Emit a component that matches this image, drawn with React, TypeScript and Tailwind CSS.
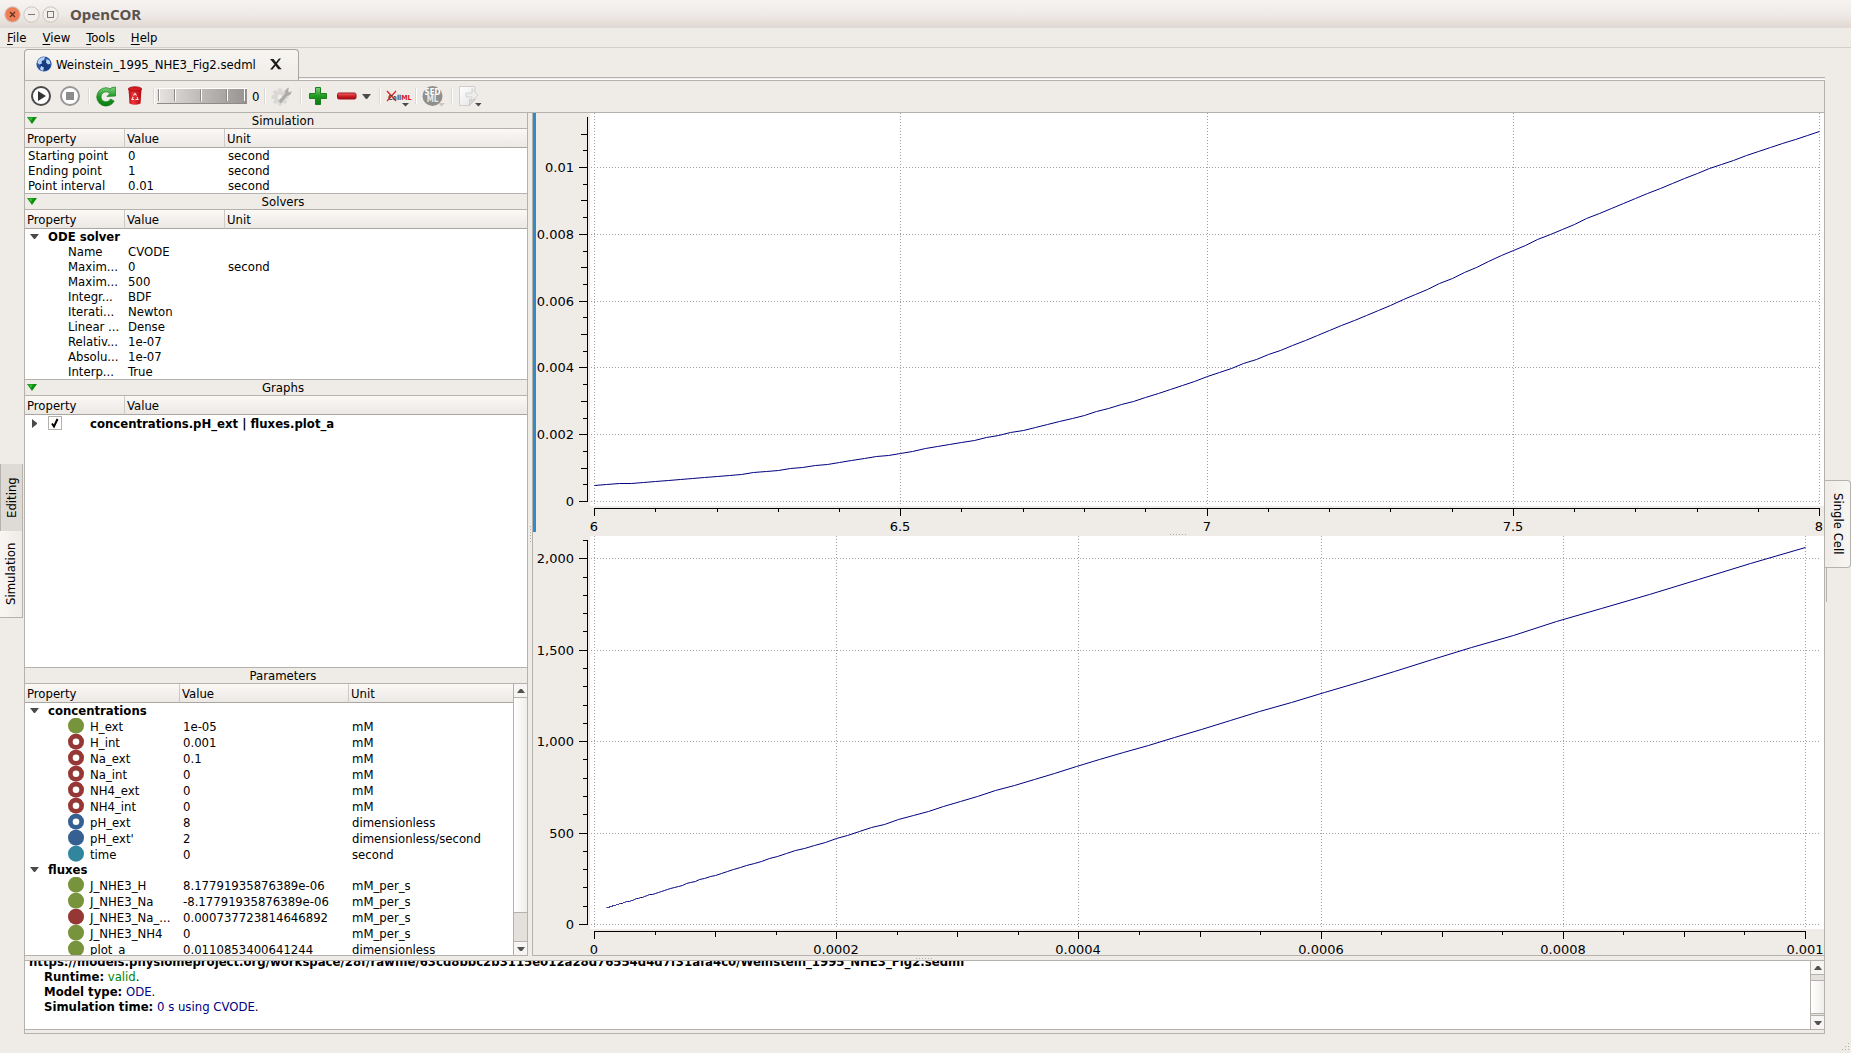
import { useLayoutEffect, useRef, useState } from "react";
import type { ReactNode } from "react";

type IconKind = "constant" | "computed" | "editableConstant" | "editableState" | "rate" | "voi";

interface Row {
  name: string;
  value?: string;
  unit?: string;
  icon?: IconKind;
  group?: boolean;
}

const simulationRows: Row[] = [
  { name: "Starting point", value: "0", unit: "second" },
  { name: "Ending point", value: "1", unit: "second" },
  { name: "Point interval", value: "0.01", unit: "second" },
];

const solverRows: Row[] = [
  { name: "Name", value: "CVODE" },
  { name: "Maxim...", value: "0", unit: "second" },
  { name: "Maxim...", value: "500" },
  { name: "Integr...", value: "BDF" },
  { name: "Iterati...", value: "Newton" },
  { name: "Linear ...", value: "Dense" },
  { name: "Relativ...", value: "1e-07" },
  { name: "Absolu...", value: "1e-07" },
  { name: "Interp...", value: "True" },
];

const parameterRows: Row[] = [
  { name: "concentrations", group: true },
  { name: "H_ext", value: "1e-05", unit: "mM", icon: "computed" },
  { name: "H_int", value: "0.001", unit: "mM", icon: "editableConstant" },
  { name: "Na_ext", value: "0.1", unit: "mM", icon: "editableConstant" },
  { name: "Na_int", value: "0", unit: "mM", icon: "editableConstant" },
  { name: "NH4_ext", value: "0", unit: "mM", icon: "editableConstant" },
  { name: "NH4_int", value: "0", unit: "mM", icon: "editableConstant" },
  { name: "pH_ext", value: "8", unit: "dimensionless", icon: "editableState" },
  { name: "pH_ext'", value: "2", unit: "dimensionless/second", icon: "rate" },
  { name: "time", value: "0", unit: "second", icon: "voi" },
  { name: "fluxes", group: true },
  { name: "J_NHE3_H", value: "8.17791935876389e-06", unit: "mM_per_s", icon: "computed" },
  { name: "J_NHE3_Na", value: "-8.17791935876389e-06", unit: "mM_per_s", icon: "computed" },
  { name: "J_NHE3_Na_...", value: "0.000737723814646892", unit: "mM_per_s", icon: "constant" },
  { name: "J_NHE3_NH4", value: "0", unit: "mM_per_s", icon: "computed" },
  { name: "plot_a", value: "0.0110853400641244", unit: "dimensionless", icon: "computed" },
];

const iconColors: Record<IconKind, string> = {
  constant: "#953735",
  computed: "#77933c",
  editableConstant: "#953735",
  editableState: "#376092",
  rate: "#376092",
  voi: "#31859c",
};

/* ---------- plots ---------- */

type Point = [number, number];

interface PlotProps {
  label: string;
  xMin: number;
  xMax: number;
  xMajor: number;
  xMinor: number;
  xMedium?: number;
  yMax: number;
  yMajor: number;
  yMinor: number;
  yMedium?: number;
  rightPad: number;
  points: Point[];
  selected?: boolean;
}

const isMultiple = (v: number, step?: number) =>
  !!step && Math.abs(v / step - Math.round(v / step)) < 1e-6;

const range = (from: number, to: number, step: number) =>
  Array.from({ length: Math.floor((to - from) / step + 1e-6) + 1 }, (_, i) => from + i * step);

const formatTick = (v: number) =>
  v >= 1000 ? v.toLocaleString("en-US") : String(Number(v.toPrecision(6)));

// cubic Hermite interpolation through the knots
function interpolate(knots: Point[], x: number) {
  let i = 0;
  while (i < knots.length - 2 && x > knots[i + 1][0]) i++;
  const slope = (k: number) => {
    const a = knots[Math.max(k - 1, 0)];
    const b = knots[Math.min(k + 1, knots.length - 1)];
    return (b[1] - a[1]) / (b[0] - a[0]);
  };
  const [x0, y0] = knots[i];
  const [x1, y1] = knots[i + 1];
  const dx = x1 - x0;
  const t = (x - x0) / dx;
  const t2 = t * t;
  const t3 = t2 * t;
  return (
    (2 * t3 - 3 * t2 + 1) * y0 +
    (t3 - 2 * t2 + t) * dx * slope(i) +
    (3 * t2 - 2 * t3) * y1 +
    (t3 - t2) * dx * slope(i + 1)
  );
}

function Plot({ label, xMin, xMax, xMajor, xMinor, xMedium, yMax, yMajor, yMinor, yMedium, rightPad, points, selected }: PlotProps) {
  const ref = useRef<HTMLDivElement>(null);
  const [size, setSize] = useState({ w: 1291, h: 419 });

  useLayoutEffect(() => {
    const el = ref.current;
    if (!el) return;
    const measure = () => setSize({ w: el.clientWidth, h: el.clientHeight });
    measure();
    const observer = new ResizeObserver(measure);
    observer.observe(el);
    return () => observer.disconnect();
  }, []);

  const { w, h } = size;
  const left = 61;
  const right = w - rightPad;
  const top = 4;
  const bottom = h - 31;
  const px = (x: number) => left + ((x - xMin) / (xMax - xMin)) * (right - left);
  const py = (y: number) => bottom - (y / yMax) * (bottom - top);
  const snap = (v: number) => Math.round(v) + 0.5;

  const xTicks = range(xMin, xMax, xMinor);
  const yTicks = range(0, yMax, yMinor).filter((v) => !yMedium || v < yMax * 0.9999);
  const xMajors = xTicks.filter((v) => isMultiple(v, xMajor));
  const yMajors = yTicks.filter((v) => isMultiple(v, yMajor));

  return (
    <div ref={ref} className="relative min-h-0 flex-1">
      <svg width={w} height={h} className="absolute inset-0 overflow-visible" role="img" aria-label={label}>
        <rect x={57} y={0} width={Math.max(w - 57, 0)} height={h - 26} fill="#fff" />
        {selected && <rect x={0} y={0} width={3} height={h} fill="#308cc6" />}
        <g stroke="#a0a0a4" strokeDasharray="1 2" shapeRendering="crispEdges">
          {xMajors.map((v) => (
            <line key={v} x1={snap(px(v))} x2={snap(px(v))} y1={0} y2={h - 27} />
          ))}
          {yMajors.map((v) => (
            <line key={v} x1={58} x2={w - 3} y1={snap(py(v))} y2={snap(py(v))} />
          ))}
        </g>
        <polyline
          points={points.map(([x, y]) => `${snap(px(x))},${snap(py(y))}`).join(" ")}
          fill="none"
          stroke="#00007f"
        />
        <g stroke="#000" shapeRendering="crispEdges">
          <line x1={54.5} x2={54.5} y1={top} y2={bottom + 1} />
          <line x1={left} x2={right + 1} y1={h - 23.5} y2={h - 23.5} />
          {yTicks.map((v) => (
            <line
              key={v}
              x1={isMultiple(v, yMajor) ? 46 : isMultiple(v, yMedium) ? 48 : 50}
              x2={54}
              y1={snap(py(v))}
              y2={snap(py(v))}
            />
          ))}
          {xTicks.map((v) => (
            <line
              key={v}
              x1={snap(px(v))}
              x2={snap(px(v))}
              y1={h - 24}
              y2={h - (isMultiple(v, xMajor) ? 16 : isMultiple(v, xMedium) ? 18 : 20)}
            />
          ))}
        </g>
        <g className="fill-black font-['DejaVu_Sans'] text-[13px]">
          {yMajors.map((v) => (
            <text key={v} x={41} y={Math.round(py(v)) + 5} textAnchor="end">
              {formatTick(v)}
            </text>
          ))}
          {xMajors.map((v) => (
            <text key={v} x={Math.round(px(v))} y={h - 1} textAnchor="middle">
              {formatTick(v)}
            </text>
          ))}
        </g>
      </svg>
    </div>
  );
}

const steps = range(0, 1, 0.01);

const fluxKnots = [
  0.00049, 0.0006, 0.00075, 0.00094, 0.00117, 0.00145, 0.00177, 0.00214, 0.00258, 0.00312, 0.00373, 0.00439, 0.00511,
  0.00588, 0.00669, 0.00752, 0.00831, 0.00908, 0.00982, 0.01048, 0.01108,
].map((y, i): Point => [6 + i * 0.1, y]);

const fluxPoints = steps.map((t): Point => [6 + 2 * t, interpolate(fluxKnots, 6 + 2 * t)]);

const concentrationKnots: Point[] = [
  [0.00001, 91],
  [0.0001, 270],
  [0.0002, 470],
  [0.0004, 867],
  [0.0006, 1263],
  [0.0008, 1666],
  [0.001, 2062],
];

const concentrationPoints = steps.map((t): Point => {
  const x = 0.001 * Math.pow(10, -2 * t);
  return [x, interpolate(concentrationKnots, x)];
});

/* ---------- property panels ---------- */

function DownArrow() {
  return (
    <svg width="9" height="5" viewBox="0 0 9 5" className="shrink-0">
      <path d="M0 0h9L5 5H4z" fill="#4b4a48" />
    </svg>
  );
}

function SectionTitle({ title, collapsible = true }: { title: string; collapsible?: boolean }) {
  return (
    <div className="relative flex h-4 shrink-0 items-center justify-center border-b border-[#b5b1ac] pl-[14px]">
      {collapsible && (
        <button className="absolute left-[2px] top-1" aria-label={`Collapse ${title}`}>
          <svg width="10" height="7" viewBox="0 0 10 7">
            <path d="M0 0h10L5 7z" fill="#0a8f0a" />
            <path d="M1 .5h5L4 4z" fill="#3cb83c" />
          </svg>
        </button>
      )}
      <h2>{title}</h2>
    </div>
  );
}

function TableHead({ columns }: { columns: string[] }) {
  return (
    <thead>
      <tr className="h-[19px] bg-linear-to-b from-[#fbf8f6] to-[#ebe7e3]">
        {columns.map((c, i) => (
          <th
            key={c}
            className={
              i < columns.length - 1
                ? "border-b border-r border-b-[#aaa6a2] border-r-[#cdc9c5] p-0 pl-[2px] text-left font-normal"
                : "border-b border-b-[#aaa6a2] p-0 pl-[2px] text-left font-normal"
            }
          >
            {c}
          </th>
        ))}
      </tr>
    </thead>
  );
}

function ParameterIcon({ kind }: { kind: IconKind }) {
  return (
    <svg width="16" height="16" viewBox="0 0 16 16" className="shrink-0">
      <circle cx="8" cy="7.7" r="8" fill={iconColors[kind]} />
      {kind.startsWith("editable") && <circle cx="8" cy="7.7" r="3.3" fill="#fff" />}
    </svg>
  );
}

function GroupCell({ name, span }: { name: string; span: number }) {
  return (
    <td colSpan={span} className="p-0 pl-[5px]">
      <div className="flex items-center gap-[9px] font-bold">
        <DownArrow />
        {name}
      </div>
    </td>
  );
}

function ScrollButton({ dir }: { dir: "up" | "down" }) {
  return (
    <button
      aria-label={`Scroll ${dir}`}
      className={
        dir === "up"
          ? "flex h-[14px] shrink-0 items-center justify-center border-b border-[#b5b1ac] bg-[#f7f5f3]"
          : "flex h-[14px] shrink-0 items-center justify-center border-t border-[#b5b1ac] bg-[#f7f5f3]"
      }
    >
      <svg width="8" height="4" viewBox="0 0 8 4">
        <path d={dir === "up" ? "M0 4h8L5 0H3z" : "M0 0h8L5 4H3z"} fill="#55524f" />
      </svg>
    </button>
  );
}

function Sidebar() {
  return (
    <aside className="flex w-[503px] shrink-0 flex-col border-b border-r border-[#b5b1ac]">
      <SectionTitle title="Simulation" />
      <table className="w-full shrink-0 table-fixed border-separate border-spacing-0 border-b border-[#b5b1ac] bg-white">
        <colgroup>
          <col className="w-[100px]" />
          <col className="w-[100px]" />
          <col />
        </colgroup>
        <TableHead columns={["Property", "Value", "Unit"]} />
        <tbody>
          {simulationRows.map((r) => (
            <tr key={r.name} className="h-[15px]">
              <td className="p-0 pl-[3px]">{r.name}</td>
              <td className="p-0 pl-[3px]">{r.value}</td>
              <td className="p-0 pl-[3px]">{r.unit}</td>
            </tr>
          ))}
        </tbody>
      </table>

      <SectionTitle title="Solvers" />
      <table className="w-full shrink-0 table-fixed border-separate border-spacing-0 border-b border-[#b5b1ac] bg-white">
        <colgroup>
          <col className="w-[100px]" />
          <col className="w-[100px]" />
          <col />
        </colgroup>
        <TableHead columns={["Property", "Value", "Unit"]} />
        <tbody>
          <tr className="h-[15px]">
            <GroupCell name="ODE solver" span={3} />
          </tr>
          {solverRows.map((r, i) => (
            <tr key={i} className="h-[15px]">
              <td className="whitespace-nowrap p-0 pl-[43px]">{r.name}</td>
              <td className="p-0 pl-[3px]">{r.value}</td>
              <td className="p-0 pl-[3px]">{r.unit}</td>
            </tr>
          ))}
        </tbody>
      </table>

      <SectionTitle title="Graphs" />
      <div className="min-h-0 flex-1 border-b border-[#b5b1ac] bg-white">
        <table className="w-full table-fixed border-separate border-spacing-0">
          <colgroup>
            <col className="w-[100px]" />
            <col />
          </colgroup>
          <TableHead columns={["Property", "Value"]} />
          <tbody>
            <tr className="h-4">
              <td colSpan={2} className="p-0 pl-[7px]">
                <label className="flex items-center font-bold">
                  <svg width="5" height="9" viewBox="0 0 5 9" className="mr-[11px]">
                    <path d="M0 0v9l5-4V4z" fill="#4b4a48" />
                  </svg>
                  <span className="relative mr-7 h-[14px] w-[14px]">
                    <input
                      type="checkbox"
                      defaultChecked
                      className="peer block h-[14px] w-[14px] appearance-none border border-[#b5b1ac] bg-white"
                    />
                    <svg
                      viewBox="0 0 14 14"
                      className="pointer-events-none absolute inset-0 hidden h-[14px] w-[14px] peer-checked:block"
                    >
                      <path d="M4 7.500l2 3 3.500-7.500" fill="none" stroke="#000" strokeWidth="2" />
                    </svg>
                  </span>
                  concentrations.pH_ext | fluxes.plot_a
                </label>
              </td>
            </tr>
          </tbody>
        </table>
      </div>

      <SectionTitle title="Parameters" collapsible={false} />
      <div className="flex h-[271px] shrink-0 overflow-hidden bg-white">
        <div className="min-w-0 flex-1 overflow-hidden">
          <table className="w-full table-fixed border-separate border-spacing-0">
            <colgroup>
              <col className="w-[155px]" />
              <col className="w-[169px]" />
              <col />
            </colgroup>
            <TableHead columns={["Property", "Value", "Unit"]} />
            <tbody>
              {parameterRows.map((r) =>
                r.group ? (
                  <tr key={r.name} className="h-[15px]">
                    <GroupCell name={r.name} span={3} />
                  </tr>
                ) : (
                  <tr key={r.name} className="h-4">
                    <td className="p-0 pl-[43px]">
                      <div className="flex items-center gap-[6px] whitespace-nowrap">
                        {r.icon && <ParameterIcon kind={r.icon} />}
                        {r.name}
                      </div>
                    </td>
                    <td className="p-0 pl-[3px]">{r.value}</td>
                    <td className="p-0 pl-[3px]">{r.unit}</td>
                  </tr>
                )
              )}
            </tbody>
          </table>
        </div>
        <div className="flex w-[14px] flex-col border-l border-[#b5b1ac] bg-[#e4e1dd]">
          <ScrollButton dir="up" />
          <div className="h-[215px] border-b border-[#b5b1ac] bg-linear-to-r from-white to-[#f0eeea]" />
          <div className="flex-1" />
          <ScrollButton dir="down" />
        </div>
      </div>
    </aside>
  );
}

/* ---------- tool bar ---------- */

function Tool({ label, children }: { label: string; children: ReactNode }) {
  return (
    <button title={label} aria-label={label} className="relative h-5 w-5 shrink-0">
      <svg viewBox="0 0 20 20" className="h-5 w-5 overflow-visible">
        {children}
      </svg>
    </button>
  );
}

function Group({ children, last }: { children: ReactNode; last?: boolean }) {
  return (
    <div className="flex items-center">
      <div className="flex items-center gap-[9px] pl-[6px] pr-2">{children}</div>
      {!last && <div className="h-4 w-[2px] border-l border-[#dcd8d4] bg-white" />}
    </div>
  );
}

function Toolbar() {
  return (
    <div className="flex h-8 shrink-0 items-center border-b border-[#b5b1ac] pb-px" role="toolbar">
      <svg width="0" height="0" className="absolute">
        <defs>
          <linearGradient id="green" x1="0" y1="0" x2="0" y2="1">
            <stop offset="0" stopColor="#7fd07a" />
            <stop offset=".5" stopColor="#1f9a24" />
            <stop offset="1" stopColor="#0b7a12" />
          </linearGradient>
          <linearGradient id="red" x1="0" y1="0" x2="0" y2="1">
            <stop offset="0" stopColor="#f07070" />
            <stop offset=".5" stopColor="#d01f28" />
            <stop offset="1" stopColor="#a30d18" />
          </linearGradient>
          <linearGradient id="bin" x1="0" y1="0" x2="1" y2="0">
            <stop offset="0" stopColor="#b80d14" />
            <stop offset=".35" stopColor="#f0343a" />
            <stop offset="1" stopColor="#b0080f" />
          </linearGradient>
          <linearGradient id="paper" x1="0" y1="0" x2="1" y2="1">
            <stop offset="0" stopColor="#ffffff" />
            <stop offset="1" stopColor="#e3e3e3" />
          </linearGradient>
        </defs>
      </svg>
      <Group>
        <Tool label="Run simulation">
          <circle cx="10" cy="10" r="9" fill="#fff" stroke="#4a4a4a" strokeWidth="2" />
          <path d="M7 5l8 5-8 5z" fill="#333" />
        </Tool>
        <Tool label="Stop simulation">
          <circle cx="10" cy="10" r="9" fill="#fff" stroke="#979797" strokeWidth="2" />
          <rect x="6" y="6" width="8" height="8" fill="#8c8c8c" />
        </Tool>
      </Group>
      <Group>
        <Tool label="Reset model parameters">
          <path
            d="M13.500 3.200L16 1.500 19.500 1v9l-8.500.5 2.800-3A5 5 0 1 0 14.500 13l3.700 2A9.200 9.200 0 1 1 13.500 2.400z"
            fill="url(#green)"
            stroke="#17801c"
            strokeWidth=".7"
          />
        </Tool>
        <Tool label="Clear simulation data">
          <path d="M3.500 3h13l-1 14.500q-5.500 2.500-11 0z" fill="url(#bin)" />
          <ellipse cx="10" cy="3" rx="6.700" ry="2.200" fill="#d61c22" stroke="#9c0a10" strokeWidth=".8" />
          <path d="M8.500 9.500l1.500-2 1.500 2M12 11l1 2.500h-2.500M9 13.500H7L8 11" fill="none" stroke="#ffdede" strokeWidth="1.100" />
        </Tool>
      </Group>
      <div className="flex items-center">
        <label className="relative ml-[2px] block h-[16px] w-[90px]">
          <input
            type="range"
            aria-label="Simulation delay"
            defaultValue={0}
            className="block h-[16px] w-[90px] appearance-none border-b border-[#8d8a87] bg-linear-to-r from-[#e8e4e1] via-[#bdb9b6] to-[#969390] [&::-webkit-slider-thumb]:opacity-0"
          />
          <svg viewBox="0 0 90 16" className="pointer-events-none absolute inset-0 h-[16px] w-[90px]">
            <g fill="#fff">
              <rect x="0" width="90" height="1" />
              <rect x="2" y="1" width="1" height="12" />
              <rect x="18" y="1" width="1" height="12" />
              <rect x="44" y="1" width="1" height="12" />
              <rect x="70" y="1" width="1" height="12" />
              <rect x="87" y="1" width="1" height="12" />
            </g>
            <g fill="#8d8a87">
              <rect x="1" y="1" width="1" height="12" />
              <rect x="17" y="1" width="1" height="12" />
              <rect x="43" y="1" width="1" height="12" />
              <rect x="69" y="1" width="1" height="12" />
              <rect x="88" y="1" width="1" height="14" />
            </g>
          </svg>
        </label>
        <output className="w-[17px] pl-[5px]">0</output>
        <div className="h-4 w-[2px] border-l border-[#dcd8d4] bg-white" />
      </div>
      <Group>
        <Tool label="Simulation settings">
          <g transform="translate(8 11)" fill="#dad8d6">
            {[0, 45, 90, 135].map((a) => (
              <rect key={a} x="-2" y="-8.5" width="4" height="17" rx="1" transform={`rotate(${a})`} />
            ))}
            <circle r="6" />
            <circle r="2.500" fill="#f0eeec" />
          </g>
          <path d="M9 17.500l-2.500-2.500 6.500-7.500q-.5-4.500 4-6l-1 3.500 1.500 1.500 2-1.500q0 4.500-4.500 5z" fill="#aeacaa" />
        </Tool>
      </Group>
      <Group>
        <Tool label="Add graph panel">
          <path
            d="M7.500 1.500h5v6h6v5h-6v6h-5v-6h-6v-5h6z"
            fill="url(#green)"
            stroke="#17801c"
            strokeLinejoin="round"
          />
        </Tool>
        <Tool label="Remove graph panel">
          <rect x=".5" y="7" width="18.500" height="6" rx="1.500" fill="url(#red)" stroke="#a3101a" />
        </Tool>
        <button aria-label="Remove graph panel menu" className="-ml-1 flex h-5 w-[9px] items-center">
          <DownArrow />
        </button>
      </Group>
      <Group>
        <Tool label="Development: CellML">
          <path d="M0 5l9 10M9 5L0 15" stroke="#e02020" strokeWidth="1.200" />
          <text x="1" y="14" fill="#4a4a4a" className="font-['DejaVu_Sans_Condensed'] text-[7px] font-bold">
            Cell
            <tspan fill="#d02020">ML</tspan>
          </text>
          <path d="M15 17h7l-3.500 3.500z" fill="#4b4a48" />
        </Tool>
      </Group>
      <Group>
        <Tool label="Export to SED-ML">
          <circle cx="9.500" cy="10" r="10" fill="#8f8f8f" />
          <text x="9.500" y="9" textAnchor="middle" fill="#fff" className="font-['DejaVu_Sans_Condensed'] text-[8px] font-bold">
            SED
          </text>
          <text x="9.500" y="16" textAnchor="middle" fill="#e8e8e8" className="font-['DejaVu_Sans_Condensed'] text-[8px] font-bold">
            ML
          </text>
          <path d="M15 17h7l-3.500 3.500z" fill="#c9c6c3" />
        </Tool>
      </Group>
      <Group last>
        <Tool label="Export simulation data">
          <path d="M.5.5h15.500v13l-5.500 6H.5z" fill="url(#paper)" stroke="#cfcfcf" />
          <path d="M10.500 19.500v-6H16z" fill="#d8d8d8" stroke="#c4c4c4" strokeWidth=".7" />
          <path d="M7 7h6V2.500l6 6.500-6 6V11H7z" fill="#ededeb" stroke="#cdcdcd" strokeWidth=".8" />
          <path d="M16 17h6.500l-3 3.500z" fill="#4b4a48" />
        </Tool>
      </Group>
    </div>
  );
}

/* ---------- window ---------- */

function TitleBar() {
  return (
    <header className="flex h-7 shrink-0 items-center bg-linear-to-b from-[#f6f3f0] via-[#efebe8] to-[#e0d8d2] pl-1">
      <div className="flex gap-[2px] pt-[1px]">
        <button aria-label="Close">
          <svg width="17" height="17" viewBox="0 0 17 17" className="block">
            <circle cx="8.500" cy="8.500" r="7.700" fill="#ef7d57" stroke="#cfc5bd" />
            <path d="M6 6l5 5M11 6l-5 5" stroke="#5d3424" strokeWidth="1.300" />
          </svg>
        </button>
        <button aria-label="Minimise">
          <svg width="17" height="17" viewBox="0 0 17 17" className="block">
            <circle cx="8.500" cy="8.500" r="7.700" fill="#f1eeeb" stroke="#cbc5bf" />
            <path d="M5 8.500h7" stroke="#7c7872" />
          </svg>
        </button>
        <button aria-label="Maximise">
          <svg width="17" height="17" viewBox="0 0 17 17" className="block">
            <circle cx="8.500" cy="8.500" r="7.700" fill="#f1eeeb" stroke="#cbc5bf" />
            <rect x="5.500" y="5.500" width="6" height="6" fill="none" stroke="#7c7872" />
          </svg>
        </button>
      </div>
      <h1 className="pl-[11px] font-['Noto_Sans'] text-[15px] font-bold text-[#5a534e]">OpenCOR</h1>
    </header>
  );
}

function MenuBar() {
  return (
    <nav className="flex h-5 shrink-0 items-center gap-4 border-b border-[#d3cfcb] pl-[7px]">
      {["File", "View", "Tools", "Help"].map((m) => (
        <button key={m}>
          <span className="underline underline-offset-2">{m[0]}</span>
          {m.slice(1)}
        </button>
      ))}
    </nav>
  );
}

function FileTab() {
  return (
    <div className="flex h-8 shrink-0 items-end">
      <div className="flex h-[31px] w-[275px] items-center rounded-t border border-b-0 border-[#a9a5a1] bg-linear-to-b from-[#f7f5f2] to-[#efebe7] pb-[2px] pl-[11px]">
        <svg width="16" height="16" viewBox="0 0 16 16" className="mr-1">
          <circle cx="8" cy="8" r="7.600" fill="#2b56a5" />
          <circle cx="9" cy="9.500" r="5" fill="#183a80" />
          <path d="M3 3q3-2.500 6-2L8 4 5.500 5 6 7.500 3.500 8.500 1.500 7q0-2.500 1.500-4zM10.500 3l3 1.500 1 3-2.500 1-2-2zM5 10l3 1.500-1 3.500q-2-.5-3-2z" fill="#b9d2f2" />
        </svg>
        <button className="whitespace-nowrap">Weinstein_1995_NHE3_Fig2.sedml</button>
        <button aria-label="Close file" className="ml-[14px]">
          <svg width="12" height="12" viewBox="0 0 12 12" className="block">
            <path d="M0 1h3.500L6 4.200 9 .5h2L7 5.700l4.700 5.500H8.300L5.500 7.700 2.500 11.500H0l4.500-5.300z" fill="#1c1c1c" />
          </svg>
        </button>
      </div>
      <div className="h-[3px] flex-1 border-b border-t border-b-white border-t-[#b5b1ac]" />
    </div>
  );
}

function Grip({ vertical }: { vertical?: boolean }) {
  return (
    <svg width={vertical ? 3 : 17} height={vertical ? 17 : 3} fill="#b0aca8">
      {[0, 3, 6, 9, 12, 15].map((p) => (
        <rect key={p} x={vertical ? 1 : p} y={vertical ? p : 1} width="1" height="1" />
      ))}
    </svg>
  );
}

function LogPane() {
  return (
    <section className="flex h-[70px] shrink-0 overflow-hidden border-y border-[#b5b1ac] bg-white">
      <div className="flex min-w-0 flex-1 flex-col overflow-hidden pl-1">
        <div className="-mt-[7px] leading-[15px]">
          <p className="whitespace-nowrap font-bold">
            https://models.physiomeproject.org/workspace/28f/rawfile/63cd8bbc2b3115e012a28d76554d4d7f31afa4c0/Weinstein_1995_NHE3_Fig2.sedml
          </p>
          <p className="pl-[15px]">
            <strong>Runtime:</strong> <span className="text-[#008700]">valid</span>.
          </p>
          <p className="pl-[15px]">
            <strong>Model type:</strong> <span className="text-[#00007f]">ODE</span>.
          </p>
          <p className="pl-[15px]">
            <strong>Simulation time:</strong> <span className="text-[#00007f]">0 s using CVODE</span>.
          </p>
        </div>
      </div>
      <div className="flex w-[14px] flex-col border-l border-[#b5b1ac] bg-[#e4e1dd]">
        <ScrollButton dir="up" />
        <div className="h-[5px]" />
        <div className="flex-1 border-y border-[#b5b1ac] bg-linear-to-r from-white to-[#f0eeea]" />
        <div className="h-px" />
        <ScrollButton dir="down" />
      </div>
    </section>
  );
}

export default function App() {
  return (
    <div className="flex h-screen flex-col overflow-hidden bg-[#efebe7] font-['DejaVu_Sans_Condensed','DejaVu_Sans',sans-serif] text-[13px] leading-[15px] text-black">
      <TitleBar />
      <MenuBar />
      <div className="flex min-h-0 flex-1">
        <div className="flex w-6 shrink-0 flex-col pt-[416px]">
          <button className="flex h-[67px] w-[23px] rotate-180 items-center justify-center border-y border-l border-[#b5b1ac] bg-[#dedad6] [writing-mode:vertical-rl]">
            Editing
          </button>
          <button className="flex h-[87px] w-[23px] rotate-180 items-center justify-center border-l border-t border-[#b5b1ac] bg-linear-to-l from-[#f8f6f3] to-[#efebe7] pl-px [writing-mode:vertical-rl]">
            Simulation
          </button>
        </div>

        <main className="flex min-w-0 flex-1 flex-col">
          <FileTab />
          <div className="flex min-h-0 flex-1 flex-col border border-[#b5b1ac]">
            <Toolbar />
            <div className="flex min-h-0 flex-1">
              <Sidebar />
              <div className="flex w-1 shrink-0 items-center justify-center">
                <Grip vertical />
              </div>
              <section className="flex min-w-0 flex-1 flex-col border-b border-l border-[#b5b1ac]">
                <Plot
                  label="fluxes.plot_a against concentrations.pH_ext"
                  xMin={6}
                  xMax={8}
                  xMajor={0.5}
                  xMinor={0.1}
                  yMax={0.0115}
                  yMajor={0.002}
                  yMedium={0.001}
                  yMinor={0.0005}
                  rightPad={5}
                  points={fluxPoints}
                  selected
                />
                <div className="flex h-1 shrink-0 items-center justify-center">
                  <Grip />
                </div>
                <Plot
                  label="Second graph panel"
                  xMin={0}
                  xMax={0.001}
                  xMajor={0.0002}
                  xMedium={0.0001}
                  xMinor={0.00005}
                  yMax={2100}
                  yMajor={500}
                  yMinor={100}
                  rightPad={19}
                  points={concentrationPoints}
                />
              </section>
            </div>
            <div className="flex h-1 shrink-0 items-center justify-center">
              <Grip />
            </div>
            <LogPane />
            <div className="h-[3px] shrink-0" />
          </div>
        </main>

        <div className="flex w-[26px] shrink-0 flex-col pt-[432px]">
          <button className="flex h-[88px] w-[26px] items-center justify-center rounded-r border border-l-0 border-[#b5b1ac] bg-linear-to-r from-[#efebe7] to-[#f8f6f3] pl-[2px] [writing-mode:vertical-rl]">
            Single Cell
          </button>
          <div className="ml-[1px] h-[34px] border-l border-[#b5b1ac]" />
        </div>
      </div>
      <footer className="flex h-[19px] shrink-0 items-end justify-end pb-[2px] pr-[1px]">
        <svg width="8" height="8" fill="#b0aca8">
          <path d="M6 0h1v1h-1zM3 3h1v1h-1zM6 3h1v1h-1zM0 6h1v1h-1zM3 6h1v1h-1zM6 6h1v1h-1z" />
        </svg>
      </footer>
    </div>
  );
}
